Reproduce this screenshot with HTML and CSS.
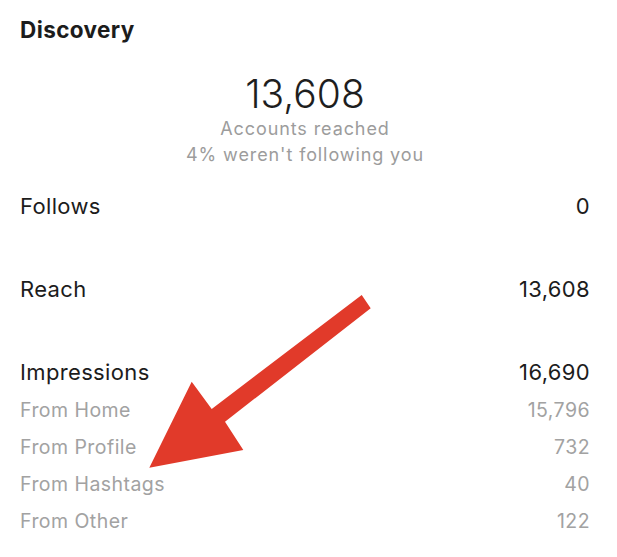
FILE: index.html
```html
<!DOCTYPE html>
<html lang="en">
<head>
<meta charset="utf-8">
<title>Discovery</title>
<link rel="stylesheet" href="styles.css">
</head>
<body>
<main class="page">
  <h1 class="title">Discovery</h1>
  <section class="hero">
    <div class="hero-number">13,608</div>
    <div class="hero-label">Accounts reached</div>
    <div class="hero-label">4% weren't following you</div>
  </section>
  <div class="row main"><span>Follows</span><span>0</span></div>
  <div class="row main"><span>Reach</span><span>13,608</span></div>
  <div class="row main"><span>Impressions</span><span>16,690</span></div>
  <div class="row sub"><span>From Home</span><span>15,796</span></div>
  <div class="row sub"><span>From Profile</span><span>732</span></div>
  <div class="row sub"><span>From Hashtags</span><span>40</span></div>
  <div class="row sub"><span>From Other</span><span>122</span></div>
  <svg class="arrow" width="617" height="557" viewBox="0 0 617 557" aria-hidden="true">
    <polygon points="361.7,295 370.7,308.3 225,421.7 243.3,450 149.3,467.7 191.7,381.7 211.7,409" fill="#e13a2a"/>
  </svg>
</main>
</body>
</html>
```
FILE: styles.css
```css
html, body {
  margin: 0;
  padding: 0;
  background: #ffffff;
}
.page {
  position: relative;
  width: 617px;
  height: 557px;
  box-sizing: border-box;
  padding: 15px 27px 0 20px;
  font-family: Inter, "Liberation Sans", sans-serif;
  color: #1c1c1c;
  overflow: hidden;
}
.title {
  margin: 0;
  font-size: 22.5px;
  font-weight: 700;
  line-height: 30px;
  letter-spacing: 0.4px;
}
.hero {
  margin-top: 25px;
  display: flex;
  flex-direction: column;
  align-items: center;
}
.hero-number {
  font-size: 39px;
  font-weight: 300;
  line-height: 48px;
  margin-bottom: -2px;
  color: #1e1e1e;
}
.hero-label {
  font-size: 18px;
  line-height: 26px;
  letter-spacing: 0.9px;
  color: #9c9c9c;
}
.row {
  display: flex;
  justify-content: space-between;
  align-items: center;
}
.row.main {
  font-size: 22px;
  line-height: 30px;
  letter-spacing: 0.35px;
  margin-top: 53px;
  color: #1c1c1c;
}
.hero + .row.main {
  margin-top: 23px;
}
.row.sub {
  font-size: 19.5px;
  line-height: 37px;
  letter-spacing: 0.45px;
  color: #a2a2a2;
}
.row.main + .row.sub {
  margin-top: 5px;
}
.arrow {
  position: absolute;
  left: 0;
  top: 0;
  pointer-events: none;
}
```
